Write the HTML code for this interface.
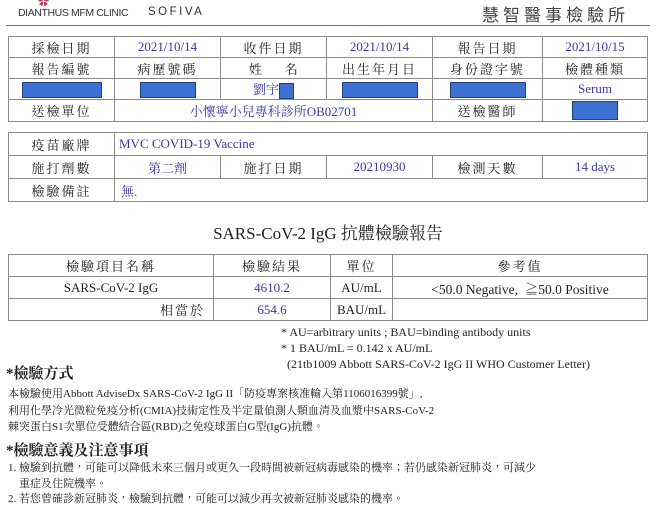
<!DOCTYPE html>
<html><head><meta charset="utf-8">
<style>
*{margin:0;padding:0;box-sizing:border-box}
body{width:656px;height:506px;background:#fff;position:relative;overflow:hidden;font-family:"Liberation Serif","Noto Serif CJK TC","Noto Serif CJK SC",serif;color:#222}
.a{position:absolute;white-space:nowrap}
table{position:absolute;border-collapse:collapse;table-layout:fixed}
td{border:1px solid #8a8a8a;text-align:center;font-size:13px;padding:0;overflow:hidden;white-space:nowrap}
.b{color:#3838a8}
.r{display:inline-block;background:#3c70d2;border:1px solid #20407a;height:16px;vertical-align:middle}
.l{letter-spacing:2px}
</style></head><body>
<div class="a" style="left:38px;top:-7px;color:#c04060;font-size:11px">✿</div>
<div class="a" style="left:18px;top:7px;font-family:'Liberation Sans',sans-serif;font-size:10.5px;color:#333;letter-spacing:-0.4px">DIANTHUS MFM CLINIC</div>
<div class="a" style="left:148px;top:6px;font-family:'Liberation Sans',sans-serif;font-size:11.5px;color:#333;letter-spacing:2.5px">SOFIVA</div>
<div class="a" style="left:482px;top:1px;font-family:'Liberation Sans','Noto Sans CJK TC',sans-serif;font-size:17px;color:#444;letter-spacing:4px">慧智醫事檢驗所</div>
<div class="a" style="left:6px;top:25px;width:644px;height:1px;background:#777"></div>

<table style="left:8px;top:36px;width:639px">
<colgroup><col style="width:106px"><col style="width:106px"><col style="width:106px"><col style="width:106px"><col style="width:110px"><col style="width:105px"></colgroup>
<tr style="height:21px"><td class="l">採檢日期</td><td class="b">2021/10/14</td><td class="l">收件日期</td><td class="b">2021/10/14</td><td class="l">報告日期</td><td class="b">2021/10/15</td></tr>
<tr style="height:21px"><td class="l">報告編號</td><td class="l">病歷號碼</td><td>姓&nbsp;&nbsp;&nbsp;&nbsp;&nbsp;&nbsp;&nbsp;名</td><td class="l">出生年月日</td><td class="l">身份證字號</td><td class="l">檢體種類</td></tr>
<tr style="height:21px"><td><span class="r" style="width:80px"></span></td><td><span class="r" style="width:56px"></span></td><td class="b">劉宇<span class="r" style="width:15px"></span></td><td><span class="r" style="width:76px"></span></td><td><span class="r" style="width:76px"></span></td><td class="b">Serum</td></tr>
<tr style="height:22px"><td class="l">送檢單位</td><td colspan="3" class="b">小懷寧小兒專科診所OB02701</td><td class="l">送檢醫師</td><td><span class="r" style="width:46px;height:19px"></span></td></tr>
</table>

<table style="left:8px;top:132px;width:639px">
<colgroup><col style="width:106px"><col style="width:106px"><col style="width:106px"><col style="width:106px"><col style="width:110px"><col style="width:105px"></colgroup>
<tr style="height:23px"><td class="l">疫苗廠牌</td><td colspan="5" class="b" style="text-align:left;padding-left:4px">MVC COVID-19 Vaccine</td></tr>
<tr style="height:23px"><td class="l">施打劑數</td><td class="b">第二劑</td><td class="l">施打日期</td><td class="b">20210930</td><td class="l">檢測天數</td><td class="b">14 days</td></tr>
<tr style="height:23px"><td class="l">檢驗備註</td><td colspan="5" class="b" style="text-align:left;padding-left:6px">無.</td></tr>
</table>

<div class="a" style="left:0;width:656px;text-align:center;top:219px;font-size:17px">SARS-CoV-2 IgG 抗體檢驗報告</div>

<table style="left:8px;top:254px;width:639px">
<colgroup><col style="width:205px"><col style="width:117px"><col style="width:62px"><col style="width:255px"></colgroup>
<tr style="height:22px"><td class="l">檢驗項目名稱</td><td class="l">檢驗結果</td><td class="l">單位</td><td class="l">參考值</td></tr>
<tr style="height:22px"><td>SARS-CoV-2 IgG</td><td class="b">4610.2</td><td>AU/mL</td><td style="font-size:13.5px">&lt;50.0 Negative,&nbsp; ≧50.0 Positive</td></tr>
<tr style="height:22px"><td style="text-align:right;padding-right:8px" class="l">相當於</td><td class="b">654.6</td><td>BAU/mL</td><td></td></tr>
</table>

<div class="a" style="left:281px;top:324px;font-size:12px;line-height:16px">* AU=arbitrary units ; BAU=binding antibody units<br>* 1 BAU/mL = 0.142 x AU/mL<br>&nbsp;&nbsp;(21tb1009 Abbott SARS-CoV-2 IgG II WHO Customer Letter)</div>

<div class="a" style="left:6px;top:362px;font-size:15px;font-weight:bold">*檢驗方式</div>
<div class="a" style="left:8px;top:386px;font-size:11px;line-height:16.5px">本檢驗使用Abbott AdviseDx SARS-CoV-2 IgG II「防疫專案核准輸入第1106016399號」,<br>利用化學冷光微粒免疫分析(CMIA)技術定性及半定量偵測人類血清及血漿中SARS-CoV-2<br>棘突蛋白S1次單位受體結合區(RBD)之免疫球蛋白G型(IgG)抗體。</div>
<div class="a" style="left:6px;top:439px;font-size:15px;font-weight:bold">*檢驗意義及注意事項</div>
<div class="a" style="left:8px;top:461px;font-size:11px;line-height:15.5px">1. 檢驗到抗體，可能可以降低未來三個月或更久一段時間被新冠病毒感染的機率；若仍感染新冠肺炎，可減少<br>&nbsp;&nbsp;&nbsp;&nbsp;重症及住院機率。<br>2. 若您曾確診新冠肺炎，檢驗到抗體，可能可以減少再次被新冠肺炎感染的機率。</div>
</body></html>
